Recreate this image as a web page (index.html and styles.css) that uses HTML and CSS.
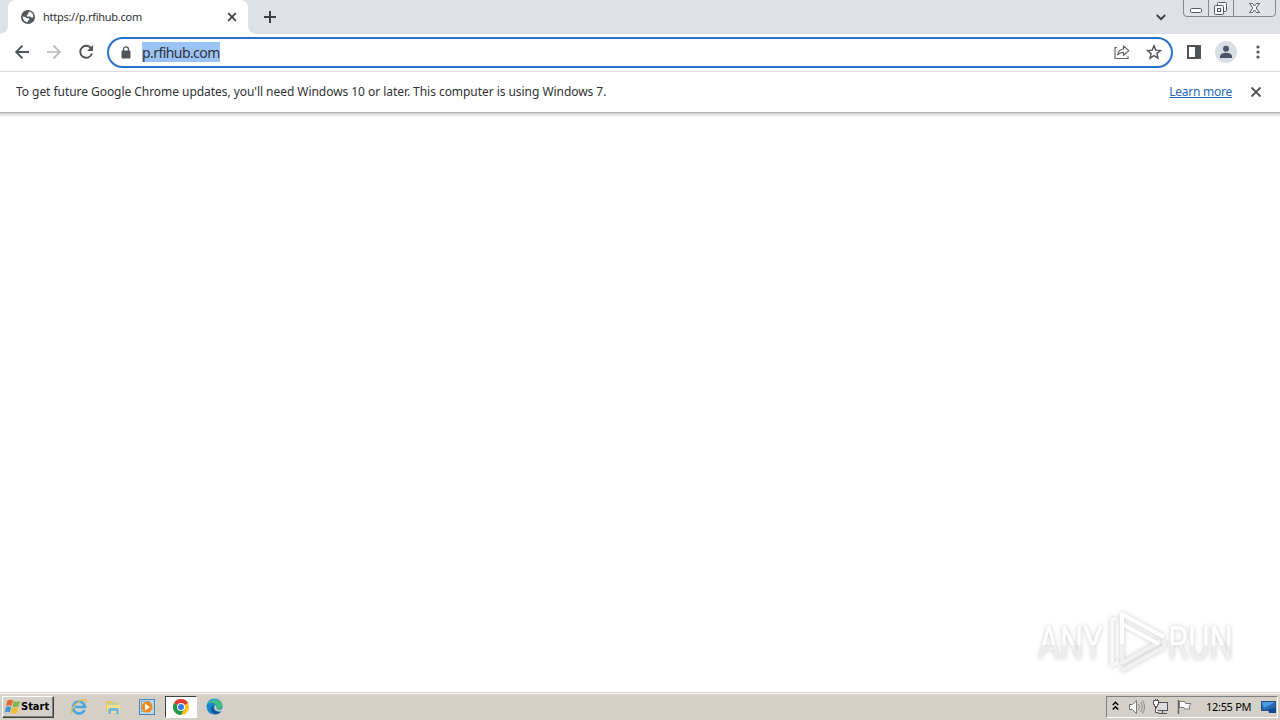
FILE: index.html
```
<!DOCTYPE html>
<html lang="en">
<head>
    <meta charset="UTF-8">
    <title>https://p.rfihub.com</title>
    <link rel="stylesheet" href="styles.css">
</head>
<body>
    <div class="tabstrip">
        <div class="tab">
            <svg class="globe" width="14" height="14" viewBox="0 0 14 14">
                <circle cx="7" cy="7" r="7" fill="#54585d"/>
                <path d="M8.5 1.6 7.2 3v1.2L5.8 5v1.4h3.4l1 1.2h1.9A5.3 5.3 0 0 0 8.5 1.6zM1.7 6.6c0 3 2.1 5.4 5 5.8V11l1.5-1.5V8.2H5.8L4.5 6.9z" fill="#fff"/>
            </svg>
            <span class="tab-title">https://p.rfihub.com</span>
            <svg width="10" height="10" viewBox="0 0 10 10"><path d="m1.2 1.2 7.6 7.6m0-7.6L1.2 8.8" stroke="#3c4043" stroke-width="1.7"/></svg>
        </div>
        <svg class="new-tab" width="12" height="12" viewBox="0 0 12 12"><path d="M6 0v12M0 6h12" stroke="#3c4043" stroke-width="2"/></svg>
        <svg class="tab-search" width="10" height="7" viewBox="0 0 10 7"><path d="m.8 1 4.2 4.2L9.2 1" fill="none" stroke="#3c4043" stroke-width="1.8"/></svg>
        <svg class="window-buttons" width="94" height="18" viewBox="0 0 94 18">
            <path d="M.5-1v14q0 3.500 3.500 3.500h85q3.500 0 3.500-3.500V-1M25.500 0v16M50.500 0v16" fill="#dfe3e9" stroke="#858994"/>
            <rect x="7.500" y="8.500" width="11" height="4" rx="1" fill="#fff" stroke="#555a66"/>
            <g fill="#f4f6f9" stroke="#555a66">
                <rect x="34.500" y="2.500" width="9" height="9" rx="1"/>
                <rect x="31.500" y="5.500" width="9" height="9" rx="1"/>
                <rect x="34.500" y="8.500" width="3" height="3"/>
                <path d="M66.500 3.500h3l2 2.500 2-2.500h3l-3.300 4.500 3.300 4.500h-3l-2-2.500-2 2.500h-3L69.800 8z"/>
            </g>
        </svg>
    </div>

    <div class="toolbar">
        <div class="nav">
            <svg width="16" height="16" viewBox="0 0 16 16"><path d="M15 8H2m6.500-6.300L2.200 8l6.300 6.300" fill="none" stroke="#505357" stroke-width="1.900"/></svg>
            <svg width="16" height="16" viewBox="0 0 16 16"><path d="M1 8h13M7.500 1.700 13.800 8l-6.300 6.300" fill="none" stroke="#b5b7ba" stroke-width="1.700"/></svg>
            <svg width="16" height="16" viewBox="0 0 16 16"><path d="M13.300 4.500A6 6 0 1 0 14 9.500" fill="none" stroke="#505357" stroke-width="1.900"/><path d="M15 1v6H9z" fill="#505357"/></svg>
        </div>
        <div class="omnibox">
            <svg class="lock" width="10" height="13" viewBox="0 0 10 13"><rect x=".5" y="4.500" width="9" height="8" rx="1" fill="#505357"/><path d="M2.500 5V3.400a2.500 2.500 0 0 1 5 0V5" fill="none" stroke="#505357" stroke-width="1.300"/></svg>
            <span class="url">p.rfihub.com</span>
            <svg class="share" width="16" height="16" viewBox="0 0 16 16" fill="none" stroke="#606468" stroke-width="1.200"><path d="M3 3.500H1v11h13v-2.200"/><path d="M9.500 2v3C5.500 5.500 4 8 3.700 11c1.500-2 3.200-2.700 5.800-2.700v3L14.900 6.600z" stroke-linejoin="round"/></svg>
            <svg class="star" width="16" height="16" viewBox="0 0 16 16"><path d="m8 1.700 1.800 4.400 4.700.4-3.600 3.100 1.100 4.600L8 11.700l-4 2.500 1.100-4.600-3.600-3.100 4.700-.4z" fill="none" stroke="#505357" stroke-width="1.400"/></svg>
        </div>
        <svg class="side-panel" width="14" height="14" viewBox="0 0 14 14"><path d="M0 0h14v14H0zM2 2v10h6V2z" fill="#505357" fill-rule="evenodd"/></svg>
        <svg class="avatar" width="22" height="22" viewBox="0 0 22 22"><circle cx="11" cy="11" r="11" fill="#dadee4"/><circle cx="11" cy="7.800" r="3" fill="#4b5568"/><path d="M5 17v-1.700c0-2.400 3.700-3.500 6-3.500s6 1.100 6 3.500V17z" fill="#4b5568"/></svg>
        <svg class="menu" width="4" height="14" viewBox="0 0 4 14" fill="#505357"><circle cx="2" cy="2" r="1.600"/><circle cx="2" cy="7" r="1.600"/><circle cx="2" cy="12" r="1.600"/></svg>
    </div>

    <div class="infobar">
        <span class="message">To get future Google Chrome updates, you'll need Windows 10 or later. This computer is using Windows 7.</span>
        <a class="learn-more" href="#">Learn more</a>
        <svg width="12" height="12" viewBox="0 0 12 12"><path d="m1.500 1.500 9 9m0-9-9 9" stroke="#505357" stroke-width="1.800"/></svg>
    </div>

    <main class="page">
        <svg class="watermark" width="220" height="76" viewBox="0 0 220 76">
            <defs>
                <linearGradient id="fade" x2="0" y2="1">
                    <stop offset=".55" stop-color="#fff"/>
                    <stop offset=".55" stop-color="#eee"/>
                </linearGradient>
            </defs>
            <g class="watermark-text" fill="url(#fade)">
                <text x="9" y="55" textLength="65" lengthAdjust="spacingAndGlyphs">ANY</text>
                <text x="139" y="55" textLength="65" lengthAdjust="spacingAndGlyphs">RUN</text>
            </g>
            <g fill="none" stroke="#fff" stroke-width="4" stroke-linejoin="round">
                <path d="M88 15h-5v46l7-3" stroke="#f8f8f8"/>
                <path d="M93 60V38M93 59l39-22M92 67l43-24v-7" stroke="#f1f1f1"/>
                <path d="M93 40V10l42 23M93 20l37 20"/>
            </g>
        </svg>
    </main>

    <div class="taskbar">
        <div class="start">
            <svg width="17" height="16" viewBox="0 0 17 16">
                <path d="M3.500 1.500q2.500-1.500 5.500 0L7.500 7q-2.500-1.400-5.500 0z" fill="#e8672c"/>
                <path d="M9.700 2q2.500 1.500 6.500-.2l-1.500 5.500q-3 1.500-6.300.2z" fill="#83b64b"/>
                <path d="M2 8q2.500-1.500 5.200 0l-1.400 5.500q-2.500-1.400-5.300 0z" fill="#4795d1"/>
                <path d="M8.200 8.300q2.500 1.500 6.200 0L13 14q-3 1.500-6.300 0z" fill="#f3bd31"/>
            </svg>
            <span>Start</span>
        </div>
        <div class="apps">
            <div class="app">
                <svg width="18" height="18" viewBox="0 0 18 18"><path d="M14.500 12A6 6 0 1 1 15 9H5" fill="none" stroke="#48a7e2" stroke-width="2.700"/><path d="M2 16C-1.500 14 5 5 11 2.500c4-1.800 6-.8 5 2" fill="none" stroke="#edb93c" stroke-width="1.300"/></svg>
            </div>
            <div class="app">
                <svg width="18" height="18" viewBox="0 0 18 18"><path d="M2 3h5l1 1.500h6V14H2z" fill="#e8c461"/><path d="M4 5h10v6H4z" fill="#b9d4a0"/><path d="M3 7h13v8H3z" fill="#f7df8c"/><path d="M4 16v-4q0-2 2-2h7q2 0 2 2v4h-3v-3H7v3z" fill="#72b8dd"/></svg>
            </div>
            <div class="app">
                <svg width="18" height="18" viewBox="0 0 18 18"><rect x="1.500" y="1.500" width="15" height="15" fill="#b9d9ef" stroke="#4986b7"/><rect x="3.500" y="3.500" width="8" height="10" fill="#e8f3fa" stroke="#7caccc"/><circle cx="9" cy="9" r="5.500" fill="#f28a1b"/><path d="m7 5.500 5 3.500-5 3.500z" fill="#fff"/></svg>
            </div>
            <div class="app active">
                <svg width="16" height="16" viewBox="0 0 16 16"><circle cx="8" cy="8" r="8" fill="#fbc116"/><path d="M8 8 1.070 4A8 8 0 0 1 14.930 4z" fill="#e33b2e"/><path d="M8 8 1.070 4A8 8 0 0 0 8 16l3.500-6z" fill="#229a4b"/><circle cx="8" cy="8" r="4" fill="#fff"/><circle cx="8" cy="8" r="3" fill="#397be5"/></svg>
            </div>
            <div class="app edge">
                <svg width="17" height="17" viewBox="0 0 17 17"><circle cx="8.500" cy="8.500" r="8" fill="#168ac9"/><path d="M.7 7C3 1 14-2 16.500 7q.3 4-4.500 4c-3 0-1-2-2-4C8 4 3 4 .7 7z" fill="#43bd82"/><path d="M.7 7C3 1 10 0 13 2 8 1 3 4 .7 7z" fill="#32a9d9"/><path d="M7 7c-4 4-1 9 3 9.300 2 0 4-1 5-3-3 1.200-8 .2-8-6.300z" fill="#12559f"/><path d="M9.500 7c2 2-.5 4 2.500 4.500 2 .5 4 0 4.800-1l.2 2q-3 1.500-6 .5C7.500 12 8 9 9.500 7z" fill="#d4d0c8"/></svg>
            </div>
        </div>
        <div class="tray">
            <svg class="expand" width="7" height="10" viewBox="0 0 7 10"><path d="m.8 4 2.700-2.700L6.200 4M.8 8.500l2.700-2.700 2.700 2.700" fill="none" stroke="#000" stroke-width="1.500"/></svg>
            <svg class="volume" width="17" height="16" viewBox="0 0 17 16"><path d="M1.500 5.500h3l4-4v13l-4-4h-3z" fill="#fff" stroke="#777"/><path d="M10.500 5q2 3 0 6m2-8q3.500 5 0 10m2-11.500q4 6.500 0 13" fill="none" stroke="#888"/></svg>
            <svg class="network" width="17" height="16" viewBox="0 0 17 16" stroke="#555"><rect x="4.500" y="3.500" width="11" height="8" fill="#ddd"/><path d="M6 14.500h9M10.500 12v2" fill="none"/><path d="M1.500 1.500h5v4h-1v2h-3v-2h-1zM3.500 7.500v6h3M3.500 0v2m2-2v2" fill="#fff"/></svg>
            <svg class="flag" width="17" height="16" viewBox="0 0 17 16"><path d="M2.500 1v14" stroke="#666" stroke-width="1.500"/><path d="M3.500 2.500h5l1 2h5.500l-2 3 1 2.500H9l-1-1.500H3.500z" fill="#fff" stroke="#777"/></svg>
            <span class="clock">12:55 PM</span>
            <svg class="desktop" width="16" height="14" viewBox="0 0 16 14"><path d="M.5 1.500h14v9H.5z" fill="#2869b5" stroke="#274e80"/><path d="M1 2h13L3 8z" fill="#4b9de0"/><path d="m7 9 8-1v5H8z" fill="#174990"/></svg>
        </div>
    </div>
</body>
</html>
```
FILE: styles.css
```
* {
    box-sizing: border-box;
}

body {
    margin: 0;
    width: 1280px;
    height: 720px;
    display: flex;
    flex-direction: column;
    overflow: hidden;
    background: #fff;
    font-family: "Noto Sans", "Open Sans", sans-serif;
    color: #303236;
}

svg {
    display: block;
    flex: none;
}

/* Tabs */
.tabstrip {
    display: flex;
    height: 34px;
    background: #dee1e8;
    padding-left: 8px;
}

.tab {
    position: relative;
    display: flex;
    align-items: center;
    width: 240px;
    padding: 0 11px 0 13px;
    background: #fff;
    border-radius: 8px 8px 0 0;
}

.tab::before,
.tab::after {
    content: "";
    position: absolute;
    bottom: 0;
    width: 8px;
    height: 8px;
}

.tab::before {
    left: -8px;
    background: radial-gradient(circle at 0 0, transparent 7.5px, #fff 8px);
}

.tab::after {
    right: -8px;
    background: radial-gradient(circle at 100% 0, transparent 7.5px, #fff 8px);
}

.tab-title {
    flex: 1;
    margin-left: 8px;
    padding-bottom: 2px;
    font-size: 11px;
    letter-spacing: -0.27px;
    white-space: nowrap;
}

.new-tab {
    margin: 11px 0 0 16px;
}

.tab-search {
    margin: 14px 0 0 auto;
}

.window-buttons {
    margin: 0 3px 0 17px;
}

/* Toolbar */
.toolbar {
    display: flex;
    align-items: center;
    height: 38px;
    padding: 0 20px 0 14px;
    border-bottom: 1px solid #d9dbde;
}

.nav {
    display: flex;
    gap: 16px;
    margin-bottom: 1px;
}

.omnibox {
    display: flex;
    align-items: center;
    width: 1066px;
    height: 31px;
    margin-left: 13px;
    padding: 0 9px 0 12px;
    border: 2px solid #2b6fcf;
    border-radius: 16px;
}

.lock,
.star {
    margin-bottom: 1px;
}

.url {
    height: 20px;
    margin: 0 auto 1px 11px;
    font-size: 14px;
    line-height: 21px;
    letter-spacing: -0.57px;
    background: #9cc3f5;
}

.share {
    margin: 0 16px 1px 0;
}

.side-panel {
    margin: 0 0 1px 14px;
}

.avatar {
    margin: 0 0 1px 14px;
}

.menu {
    margin: 0 0 1px auto;
}

/* Update notice */
.infobar {
    display: flex;
    align-items: center;
    height: 41px;
    padding: 0 18px 1px 16px;
    border-bottom: 1px solid #b4b4b4;
    box-shadow: 0 1px #cfcfcf, 0 3px #e8e8e8, 0 5px #f8f8f8;
    font-size: 12px;
    letter-spacing: -0.05px;
    white-space: nowrap;
}

.learn-more {
    margin: 0 18px 0 auto;
    color: #2868b8;
    letter-spacing: -0.25px;
}

.page {
    flex: 1;
    display: flex;
    justify-content: flex-end;
    align-items: flex-end;
    padding: 0 31px 12px 0;
}

.watermark {
    filter: drop-shadow(0 0 2px rgba(0, 0, 0, 0.22));
}

.watermark-text {
    font-family: Roboto, sans-serif;
    font-size: 47px;
}

/* Taskbar */
.taskbar {
    display: flex;
    align-items: center;
    height: 28px;
    padding: 2px;
    border-top: 1px solid #d4d0c8;
    box-shadow: inset 0 1px #fff;
    background: #d4d0c8;
    color: #000;
}

.start {
    display: flex;
    align-items: center;
    width: 52px;
    height: 22px;
    padding-left: 1px;
    border: 1px solid;
    border-color: #fff #404040 #404040 #fff;
    box-shadow: inset -1px -1px #808080;
    font: bold 11px "DejaVu Sans Condensed", "DejaVu Sans", sans-serif;
}

.apps {
    display: flex;
    gap: 2px;
    margin-left: 9px;
}

.app {
    display: flex;
    align-items: center;
    justify-content: center;
    width: 32px;
    height: 22px;
}

.app.active {
    border: 1px solid;
    border-color: #404040 #fff #fff #404040;
    background: #fff;
}

.app.edge {
    padding-right: 1px;
}

.tray {
    display: flex;
    align-items: center;
    width: 172px;
    height: 22px;
    margin-left: auto;
    padding-left: 5px;
    border: 1px solid;
    border-color: #808080 #fff #fff #808080;
}

.expand {
    margin-bottom: 2px;
}

.volume {
    margin-left: 9px;
}

.network,
.flag {
    margin-left: 7px;
}

.clock {
    margin-left: 13px;
    font-size: 11px;
    letter-spacing: -0.3px;
    white-space: nowrap;
}

.desktop {
    margin-left: auto;
}
```
